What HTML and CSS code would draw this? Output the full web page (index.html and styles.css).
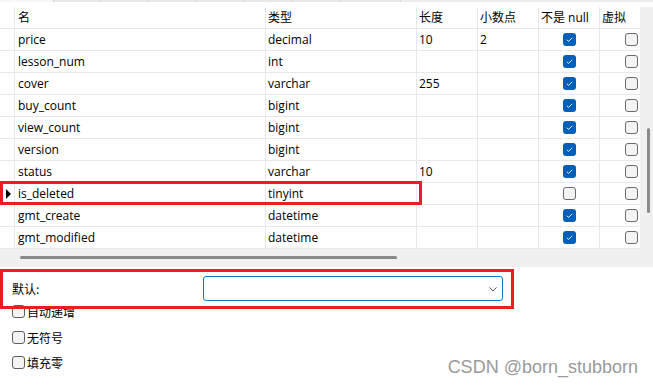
FILE: index.html
```html
<!DOCTYPE html>
<html lang="zh">
<head>
<meta charset="utf-8">
<title>表设计</title>
<link rel="stylesheet" href="styles.css">
</head>
<body>
<div class="tabs">
  <span class="tab tab-sel" style="width:54px"></span>
  <span class="tab" style="width:46px"></span>
  <span class="tab" style="width:49px"></span>
  <span class="tab" style="width:48px"></span>
  <span class="tab" style="width:48px"></span>
  <span class="tab" style="width:47px"></span>
  <span class="tab" style="width:49px"></span>
  <span class="tab" style="width:60px"></span>
</div>
<div class="gridwrap">
  <div class="table">
    <div class="c ind"></div><div class="c name">名</div><div class="c type">类型</div><div class="c len">长度</div><div class="c dec">小数点</div><div class="c nn">不是 null</div><div class="c virt last">虚拟</div>

    <div class="c ind"></div><div class="c name">price</div><div class="c type">decimal</div><div class="c len">10</div><div class="c dec">2</div><div class="c nn ctr"><span class="cb on"><svg width="13" height="13" viewBox="0 0 13 13"><path d="M3.8 6.7 L5.6 8.4 L9.2 4.8" fill="none" stroke="#fff" stroke-width="0.9"/></svg></span></div><div class="c virt last rt"><span class="cb"></span></div>

    <div class="c ind"></div><div class="c name">lesson_num</div><div class="c type">int</div><div class="c len"></div><div class="c dec"></div><div class="c nn ctr"><span class="cb on"><svg width="13" height="13" viewBox="0 0 13 13"><path d="M3.8 6.7 L5.6 8.4 L9.2 4.8" fill="none" stroke="#fff" stroke-width="0.9"/></svg></span></div><div class="c virt last rt"><span class="cb"></span></div>

    <div class="c ind"></div><div class="c name">cover</div><div class="c type">varchar</div><div class="c len">255</div><div class="c dec"></div><div class="c nn ctr"><span class="cb on"><svg width="13" height="13" viewBox="0 0 13 13"><path d="M3.8 6.7 L5.6 8.4 L9.2 4.8" fill="none" stroke="#fff" stroke-width="0.9"/></svg></span></div><div class="c virt last rt"><span class="cb"></span></div>

    <div class="c ind"></div><div class="c name">buy_count</div><div class="c type">bigint</div><div class="c len"></div><div class="c dec"></div><div class="c nn ctr"><span class="cb on"><svg width="13" height="13" viewBox="0 0 13 13"><path d="M3.8 6.7 L5.6 8.4 L9.2 4.8" fill="none" stroke="#fff" stroke-width="0.9"/></svg></span></div><div class="c virt last rt"><span class="cb"></span></div>

    <div class="c ind"></div><div class="c name">view_count</div><div class="c type">bigint</div><div class="c len"></div><div class="c dec"></div><div class="c nn ctr"><span class="cb on"><svg width="13" height="13" viewBox="0 0 13 13"><path d="M3.8 6.7 L5.6 8.4 L9.2 4.8" fill="none" stroke="#fff" stroke-width="0.9"/></svg></span></div><div class="c virt last rt"><span class="cb"></span></div>

    <div class="c ind"></div><div class="c name">version</div><div class="c type">bigint</div><div class="c len"></div><div class="c dec"></div><div class="c nn ctr"><span class="cb on"><svg width="13" height="13" viewBox="0 0 13 13"><path d="M3.8 6.7 L5.6 8.4 L9.2 4.8" fill="none" stroke="#fff" stroke-width="0.9"/></svg></span></div><div class="c virt last rt"><span class="cb"></span></div>

    <div class="c ind"></div><div class="c name">status</div><div class="c type">varchar</div><div class="c len">10</div><div class="c dec"></div><div class="c nn ctr"><span class="cb on"><svg width="13" height="13" viewBox="0 0 13 13"><path d="M3.8 6.7 L5.6 8.4 L9.2 4.8" fill="none" stroke="#fff" stroke-width="0.9"/></svg></span></div><div class="c virt last rt"><span class="cb"></span></div>

    <div class="c ind cur"><svg width="5" height="10" viewBox="0 0 5 10"><path d="M0 0 L5 5 L0 10 Z" fill="#000"/></svg></div><div class="c name">is_deleted</div><div class="c type">tinyint</div><div class="c len"></div><div class="c dec"></div><div class="c nn ctr"><span class="cb"></span></div><div class="c virt last rt"><span class="cb"></span></div>

    <div class="c ind"></div><div class="c name">gmt_create</div><div class="c type">datetime</div><div class="c len"></div><div class="c dec"></div><div class="c nn ctr"><span class="cb on"><svg width="13" height="13" viewBox="0 0 13 13"><path d="M3.8 6.7 L5.6 8.4 L9.2 4.8" fill="none" stroke="#fff" stroke-width="0.9"/></svg></span></div><div class="c virt last rt"><span class="cb"></span></div>

    <div class="c ind"></div><div class="c name">gmt_modified</div><div class="c type">datetime</div><div class="c len"></div><div class="c dec"></div><div class="c nn ctr"><span class="cb on"><svg width="13" height="13" viewBox="0 0 13 13"><path d="M3.8 6.7 L5.6 8.4 L9.2 4.8" fill="none" stroke="#fff" stroke-width="0.9"/></svg></span></div><div class="c virt last rt"><span class="cb"></span></div>
  </div>
  <div class="vscroll"><div class="vthumb"></div></div>
</div>
<div class="hscroll"><div class="hthumb"></div></div>
<div class="panel">
  <div class="def-row">
    <span class="def-label">默认:</span>
    <div class="select"><svg width="8" height="5" viewBox="0 0 8 5"><path d="M0.5 0.5 L4 4 L7.5 0.5" fill="none" stroke="#555" stroke-width="1"/></svg></div>
  </div>
  <div class="opts">
    <div class="opt"><span class="box"></span><span>自动递增</span></div>
    <div class="opt"><span class="box"></span><span>无符号</span></div>
    <div class="opt"><span class="box"></span><span>填充零</span></div>
  </div>
</div>
<div class="mark mark-row"></div>
<div class="mark mark-def"></div>
<div class="watermark">CSDN @born_stubborn</div>
</body>
</html>
```

FILE: styles.css
```css
* { box-sizing: border-box; }
html, body { margin: 0; padding: 0; }
body {
  width: 653px;
  height: 385px;
  overflow: hidden;
  position: relative;
  background: #fff;
  font-family: "Open Sans", "Noto Sans CJK SC", sans-serif;
  font-size: 12px;
  color: #000;
}
.tabs {
  display: flex;
  height: 2px;
  background: #ececec;
}
.tab {
  height: 2px;
  background: #e9e9e9;
  border-right: 1px solid #d6d6d6;
}
.tab-sel { background: #f7f7f7; }

.gridwrap {
  display: flex;
  margin-top: 5px;
}
.table {
  display: grid;
  grid-template-columns: 15px 251px 151px 61px 61px 61px 40px;
  grid-auto-rows: 22px;
  width: 640px;
  background: #fff;
}
.c {
  border-right: 1px solid #e8e8e8;
  border-bottom: 1px solid #e8e8e8;
  line-height: 21px;
  white-space: nowrap;
  overflow: hidden;
  padding-left: 2px;
}
.c.name { padding-left: 3px; }
.c.ind { padding-left: 0; }
.c.last { border-right: none; }
.c.ctr {
  display: flex;
  justify-content: center;
  align-items: center;
  padding-left: 0;
  padding-right: 0;
}
.c.rt {
  display: flex;
  justify-content: flex-end;
  align-items: center;
  padding-right: 2px;
}
.c.ind.cur {
  display: flex;
  align-items: center;
  padding-left: 6px;
}
.cur svg { display: block; flex: none; }

.cb {
  display: block;
  width: 13px;
  height: 13px;
  border: 1px solid #6a6a6a;
  border-radius: 3px;
  background: #f4f4f4;
}
.cb.on {
  border: none;
  background: #005fb8;
}
.cb svg { display: block; }
.ctr .cb { margin-left: 1px; }

.vscroll {
  width: 13px;
  height: 242px;
  background: #f0f0f0;
  padding-top: 121px;
  padding-left: 7px;
}
.vthumb {
  width: 3px;
  height: 85px;
  background: #8a8a8a;
  border-radius: 2px;
}
.hscroll {
  height: 18px;
  background: #f0f0f0;
  padding-top: 7px;
  padding-left: 20px;
}
.hthumb {
  width: 377px;
  height: 3px;
  background: #8a8a8a;
  border-radius: 2px;
}

.panel {
  padding: 9px 0 0 12px;
}
.def-row {
  display: flex;
  align-items: center;
  height: 25px;
}
.def-label {
  width: 191px;
  font-family: "Noto Sans CJK SC", sans-serif;
  line-height: 16px;
}
.select {
  width: 300px;
  height: 25px;
  border: 1px solid #0078d4;
  border-radius: 3px;
  background: #fff;
  display: flex;
  justify-content: flex-end;
  align-items: center;
  padding-right: 5px;
}
.select svg { display: block; margin-top: 1px; }
.opts {
  margin-top: 4px;
  display: flex;
  flex-direction: column;
  gap: 12.5px;
}
.opt {
  display: flex;
  align-items: center;
  height: 13px;
  font-family: "Noto Sans CJK SC", sans-serif;
  line-height: 13px;
}
.box {
  width: 13px;
  height: 13px;
  border: 1px solid #5f5f5f;
  border-radius: 3px;
  background: #f4f4f4;
  margin-right: 2px;
  flex: none;
}

.mark {
  position: absolute;
  border: 3px solid #ec1c24;
}
.mark-row {
  left: 0;
  top: 181px;
  width: 422px;
  height: 24px;
}
.mark-def {
  left: 0;
  top: 269px;
  width: 514px;
  height: 40px;
}
.watermark {
  position: absolute;
  right: 15px;
  top: 356px;
  font-family: "Liberation Sans", Arial, sans-serif;
  font-size: 18px;
  line-height: 22px;
  color: #9a9a9a;
  text-shadow: 0 0 1px #fff;
  white-space: nowrap;
}
```
